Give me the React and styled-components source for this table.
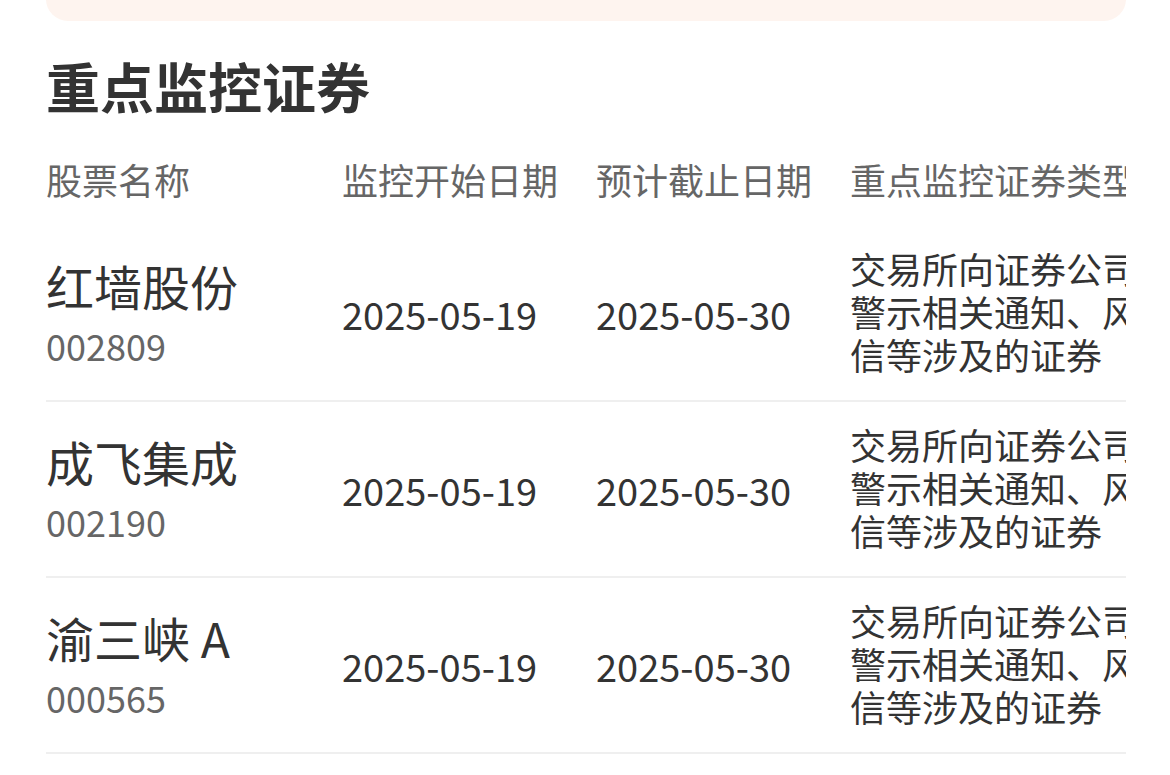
import React from "react";
import styled, { createGlobalStyle } from "styled-components";

const GlobalStyle = createGlobalStyle`
  html, body {
    margin: 0;
    padding: 0;
    background: #ffffff;
  }
  body {
    font-family: "Noto Sans CJK SC", "Noto Sans", sans-serif;
    color: #333333;
  }
`;

const Page = styled.div`
  width: 1170px;
  height: 775px;
  overflow: hidden;
  padding: 0 44px 0 46px;
  box-sizing: border-box;
  background: #ffffff;
`;

const NoticeCard = styled.div`
  height: 21px;
  margin-top: -20px;
  padding-top: 20px;
  background: #fef4ef;
  border-radius: 0 0 22px 22px;
`;

const Heading = styled.h2`
  margin: 0;
  padding-top: 36px;
  height: 115px;
  box-sizing: border-box;
  font-size: 54px;
  line-height: 58px;
  font-weight: 700;
  color: #333333;
`;

const TableScroll = styled.div`
  width: 100%;
  overflow: hidden;
`;

const Grid = styled.div`
  display: grid;
  grid-template-columns: 296px 254px 254px 470px;
  width: max-content;
`;

const HeadCell = styled.div`
  height: 90px;
  box-sizing: border-box;
  padding-bottom: 4px;
  display: flex;
  align-items: center;
  font-size: 36px;
  color: #666666;
  white-space: nowrap;
`;

const Cell = styled.div`
  height: 176px;
  box-sizing: border-box;
  display: flex;
  flex-direction: column;
  justify-content: center;
  border-bottom: 2px solid #efefef;
  color: #333333;
`;

const Name = styled.div`
  font-size: 48px;
  line-height: 64px;
  color: #333333;
`;

const Code = styled.div`
  font-size: 36px;
  line-height: 56px;
  color: #666666;
`;

const DateText = styled.div`
  font-size: 38px;
  color: #333333;
`;

const Desc = styled.div`
  width: 440px;
  margin-top: -3px;
  font-size: 36px;
  line-height: 43px;
  color: #333333;
`;

const rows = [
  { name: "红墙股份", code: "002809" },
  { name: "成飞集成", code: "002190" },
  { name: "渝三峡 A", code: "000565" },
];

const desc = "交易所向证券公司发送风险警示相关通知、风险提示短信等涉及的证券";

export default function App() {
  return (
    <>
      <GlobalStyle />
      <Page>
        <NoticeCard />
        <Heading>重点监控证券</Heading>
        <TableScroll>
          <Grid>
            <HeadCell>股票名称</HeadCell>
            <HeadCell>监控开始日期</HeadCell>
            <HeadCell>预计截止日期</HeadCell>
            <HeadCell>重点监控证券类型</HeadCell>
            {rows.map((r) => (
              <React.Fragment key={r.code}>
                <Cell>
                  <Name>{r.name}</Name>
                  <Code>{r.code}</Code>
                </Cell>
                <Cell>
                  <DateText>2025-05-19</DateText>
                </Cell>
                <Cell>
                  <DateText>2025-05-30</DateText>
                </Cell>
                <Cell>
                  <Desc>{desc}</Desc>
                </Cell>
              </React.Fragment>
            ))}
          </Grid>
        </TableScroll>
      </Page>
    </>
  );
}
